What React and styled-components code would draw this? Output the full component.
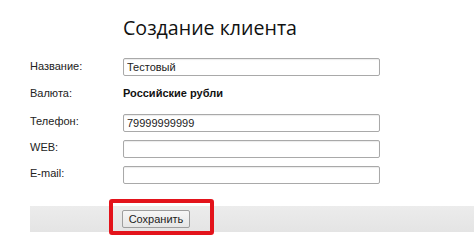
import React from 'react';
import styled, { createGlobalStyle } from 'styled-components';

const GlobalStyle = createGlobalStyle`
  body {
    margin: 0;
    background: #ffffff;
    font-family: "Liberation Sans", Arial, sans-serif;
    color: #1a1a1a;
  }
`;

const Page = styled.div`
  width: 474px;
  height: 249px;
  overflow: hidden;
  padding-top: 14px;
  box-sizing: border-box;
`;

const Title = styled.h1`
  margin: 0 0 0 123px;
  font-family: "Open Sans", sans-serif;
  font-size: 19.6px;
  font-weight: 400;
  line-height: 28px;
  color: #111;
`;

const Form = styled.div`
  display: grid;
  grid-template-columns: 93px 257px;
  grid-template-rows: 18px 22px 18px 18px 18px;
  row-gap: 8px;
  padding-left: 30px;
  margin-top: 16px;
`;

const Label = styled.div`
  font-size: 11px;
  line-height: 13px;
  color: #222;
  padding-top: ${p => p.$offset || 0}px;
`;

const Value = styled.div`
  font-size: 11px;
  font-weight: 700;
  line-height: 13px;
  color: #111;
  padding-top: ${p => p.$offset || 0}px;
`;

const Input = styled.input`
  box-sizing: border-box;
  width: 257px;
  height: 18px;
  margin: 0;
  padding: 0 3px;
  border: 1px solid #a9a9a9;
  border-radius: 2px;
  box-shadow: inset 0 1px 1px rgba(0, 0, 0, 0.08);
  font-family: "Liberation Sans", Arial, sans-serif;
  font-size: 11px;
  color: #222;
  outline: none;
`;

const ActionBar = styled.div`
  position: relative;
  margin: 22px 0 0 30px;
  height: 26px;
  background: linear-gradient(#ececec, #e4e4e4);
  padding-left: 92px;
  display: flex;
  align-items: center;
`;

const SaveButton = styled.button`
  position: relative;
  box-sizing: border-box;
  height: 18px;
  width: 68px;
  padding: 0;
  border: 1px solid #9e9e9e;
  border-radius: 2px;
  background: linear-gradient(#f6f6f6, #e6e6e6);
  font-family: "Liberation Sans", Arial, sans-serif;
  font-size: 11px;
  color: #222;
`;

const Highlight = styled.div`
  position: absolute;
  left: 79px;
  top: -7px;
  width: 105px;
  height: 36px;
  box-sizing: border-box;
  border: 4px solid #e3131b;
  border-radius: 3px;
  pointer-events: none;
`;

export default function App() {
  return (
    <>
      <GlobalStyle />
      <Page>
        <Title>Создание клиента</Title>
        <Form>
          <Label $offset={2}>Название:</Label>
          <Input defaultValue="Тестовый" />
          <Label $offset={3}>Валюта:</Label>
          <Value $offset={3}>Российские рубли</Value>
          <Label $offset={1}>Телефон:</Label>
          <Input defaultValue="79999999999" />
          <Label $offset={1}>WEB:</Label>
          <Input />
          <Label $offset={1}>E-mail:</Label>
          <Input />
        </Form>
        <ActionBar>
          <Highlight />
          <SaveButton>Сохранить</SaveButton>
        </ActionBar>
      </Page>
    </>
  );
}
